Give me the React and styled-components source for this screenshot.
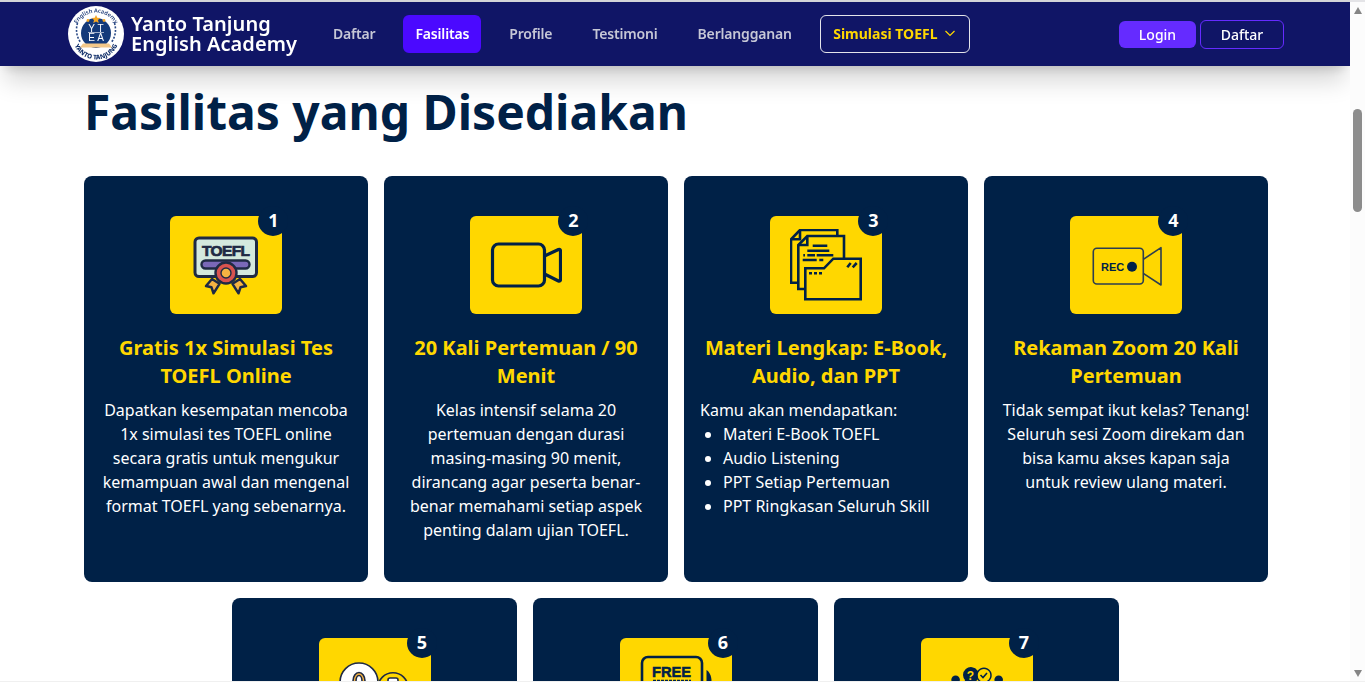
import React from "react";
import styled, { createGlobalStyle } from "styled-components";

const NAVY = "#002147";
const GOLD = "#ffd700";
const PURPLE = "#652bff";

const GlobalStyle = createGlobalStyle`
  body {
    margin: 0;
    background: #fff;
    font-family: "Noto Sans", "Open Sans", sans-serif;
  }
  * {
    box-sizing: border-box;
  }
`;

const Header = styled.header`
  position: fixed;
  z-index: 10;
  top: 0;
  left: 0;
  right: 15px;
  height: 66px;
  display: flex;
  align-items: center;
  padding: 0 66px 0 68px;
  background: #101566;
  border-top: 2px solid #d4d4d8;
  box-shadow: 0 20px 25px -5px rgba(0, 0, 0, 0.16), 0 8px 10px -6px rgba(0, 0, 0, 0.16);
`;

const Brand = styled.a`
  display: flex;
  align-items: center;
  gap: 7px;
  margin-right: 24px;
  color: #fff;
`;

const BrandName = styled.span`
  font-size: 20px;
  font-weight: 600;
  line-height: 20px;
  letter-spacing: 0.05px;
`;

const Nav = styled.nav`
  display: flex;
  align-items: center;
  gap: 16px;
`;

const NavLink = styled.a`
  height: 38px;
  display: flex;
  align-items: center;
  padding: 0 12px 2px;
  border-radius: 6px;
  font-size: 14px;
  font-weight: 600;
  letter-spacing: -0.17px;
  color: ${p => (p.$active ? "#fff" : "#c6c7d6")};
  background: ${p => (p.$active ? "#4b09ff" : "transparent")};
`;

const Dropdown = styled.button`
  width: 150px;
  height: 38px;
  display: flex;
  align-items: center;
  justify-content: center;
  gap: 5px;
  padding: 0 0 2px;
  background: none;
  border: 1px solid #e4e4ea;
  border-radius: 6px;
  font: 700 14px "Noto Sans", sans-serif;
  color: ${GOLD};
`;

const Auth = styled.div`
  margin-left: auto;
  display: flex;
  align-items: center;
  gap: 4px;
`;

const AuthButton = styled.button`
  height: ${p => (p.$outline ? "29px" : "27px")};
  width: ${p => (p.$outline ? "84px" : "77px")};
  border-radius: 6px;
  border: ${p => (p.$outline ? `1px solid ${PURPLE}` : "none")};
  background: ${p => (p.$outline ? "transparent" : PURPLE)};
  color: #fff;
  font: 500 14px "Noto Sans", sans-serif;
`;

const ScrollRail = styled.div`
  position: fixed;
  z-index: 20;
  top: 0;
  right: 0;
  bottom: 0;
  width: 15px;
  display: flex;
  flex-direction: column;
  align-items: center;
  padding: 7px 0 5px;
  background: #fcfcfc;
  box-shadow: inset 0 2px 0 #e4e4e7;
`;

const ScrollArrow = styled.span`
  width: 0;
  height: 0;
  margin-top: ${p => (p.$down ? "auto" : "0")};
  border-left: 4.5px solid transparent;
  border-right: 4.5px solid transparent;
  border-bottom: ${p => (p.$down ? "0" : "7px solid #858585")};
  border-top: ${p => (p.$down ? "7px solid #858585" : "0")};
`;

const ScrollThumb = styled.span`
  width: 9px;
  height: 103px;
  margin-top: 95px;
  border-radius: 5px;
  background: #8c8c8c;
`;

const BottomEdge = styled.div`
  position: fixed;
  z-index: 30;
  left: 0;
  right: 0;
  bottom: 0;
  height: 1px;
  background: #f0f0f0;
`;

const Page = styled.main`
  width: 1184px;
  margin: 0 0 0 84px;
  padding-top: 76px;
`;

const Heading = styled.h1`
  margin: 0 0 28px;
  font-size: 48px;
  font-weight: 700;
  line-height: 72px;
  color: ${NAVY};
`;

const Cards = styled.div`
  display: flex;
  flex-wrap: wrap;
  justify-content: center;
  gap: 16px;
`;

const Card = styled.article`
  width: ${p => (p.$wide ? "285px" : "284px")};
  min-height: 406px;
  padding: 40px 16px;
  border-radius: 8px;
  background: ${NAVY};
  color: #fff;

  &:last-child {
    margin-right: 1px;
  }
`;

const IconBox = styled.div`
  position: relative;
  width: 112px;
  height: 98px;
  margin: 0 auto 20px;
  display: flex;
  align-items: center;
  justify-content: center;
  border-radius: 6px;
  background: ${GOLD};
`;

const Badge = styled.span`
  position: absolute;
  top: -10px;
  right: -6px;
  width: 30px;
  height: 30px;
  display: flex;
  align-items: center;
  justify-content: center;
  padding: 0 0 2px 1px;
  border-radius: 50%;
  background: ${NAVY};
  color: #fff;
  font-size: 18px;
  font-weight: 700;
`;

const CardTitle = styled.h3`
  margin: 0 0 8px;
  font-size: 20px;
  font-weight: 700;
  line-height: 28px;
  text-align: center;
  color: ${GOLD};
`;

const CardText = styled.p`
  margin: 0;
  font-size: 16px;
  line-height: 24px;
  text-align: ${p => (p.$left ? "left" : "center")};
`;

const CardList = styled.ul`
  margin: 0;
  padding-left: 23px;
  font-size: 16px;
  line-height: 24px;
`;

const Logo = () => (
  <svg width="56" height="56" viewBox="0 0 56 56">
    <defs>
      <path id="logoTop" d="M6.5 28a21.5 21.5 0 0 1 43 0" />
      <path id="logoBottom" d="M4.5 30a23.5 23.5 0 0 0 47 0" />
    </defs>
    <circle cx="28" cy="28" r="28" fill="#fff" />
    <text fontSize="5.6" fill="#1c3a78" fontFamily="Noto Sans" fontWeight="600">
      <textPath href="#logoTop" startOffset="50%" textAnchor="middle">English Academy</textPath>
    </text>
    <text fontSize="6.4" fill="#12306a" fontFamily="Noto Sans" fontWeight="800">
      <textPath href="#logoBottom" startOffset="50%" textAnchor="middle">YANTO TANJUNG</textPath>
    </text>
    <circle cx="28" cy="27" r="15" fill="#143a7a" />
    <path d="M28 9l1.300 2.800 3 .3-2.300 2 .7 3-2.700-1.600-2.700 1.600.7-3-2.300-2 3-.3z" fill="#f5a623" />
    <circle cx="20" cy="14.500" r="1.400" fill="#f5a623" />
    <circle cx="36" cy="14.500" r="1.400" fill="#f5a623" />
    <g fill="none" stroke="#2a4a86" strokeWidth="1.600" strokeDasharray="2 1.500">
      <path d="M9.500 17c-2 7-1 14 3.500 20" />
      <path d="M46.500 17c2 7 1 14-3.500 20" />
    </g>
    <text x="23.500" y="25.500" fontSize="10" fill="#fff" textAnchor="middle" fontFamily="Liberation Sans">Y</text>
    <text x="32.500" y="25.500" fontSize="10" fill="#fff" textAnchor="middle" fontFamily="Liberation Sans">T</text>
    <path d="M20 26.500H36" stroke="#fff" strokeWidth="0.600" />
    <text x="23.500" y="35" fontSize="10" fill="#fff" textAnchor="middle" fontFamily="Liberation Sans">E</text>
    <text x="32.500" y="35" fontSize="10" fill="#fff" textAnchor="middle" fontFamily="Liberation Sans">A</text>
    <path d="M15 37.500h26l3 4H12z" fill="#f3c889" />
  </svg>
);

const Chevron = () => (
  <svg width="14" height="14" viewBox="0 0 14 14" fill="none" stroke={GOLD} strokeWidth="1.200">
    <path d="M2.500 5l4.500 4.500L11.500 5" />
  </svg>
);

const ToeflIcon = () => (
  <svg width="72" height="72" viewBox="0 0 72 72">
    <rect x="5" y="9" width="61.500" height="38.500" rx="4" fill="#d4e9de" stroke="#1f2a44" strokeWidth="3" />
    <text x="12" y="26.500" fontSize="15.500" fontWeight="700" fill="#1f2a44" stroke="#1f2a44" strokeWidth="0.700" fontFamily="Liberation Sans" textLength="48">TOEFL</text>
    <rect x="11.500" y="31.500" width="48" height="8" rx="4" fill="#7a68b8" stroke="#1f2a44" strokeWidth="2.400" />
    <path d="M22 50l-6 7 5.500 1.300 2 6 6-9.500zM50 50l6 7-5.500 1.300-2 6-6-9.500z" fill="#f5b342" stroke="#1f2a44" strokeWidth="2.500" strokeLinejoin="round" />
    <circle cx="36" cy="44" r="10.500" fill="#d9534f" stroke="#1f2a44" strokeWidth="2.400" />
    <circle cx="36" cy="44" r="5" fill="#f5b342" stroke="#1f2a44" strokeWidth="1.400" />
  </svg>
);

const VideoIcon = () => (
  <svg width="72" height="72" viewBox="0 0 72 72" fill="none" stroke={NAVY} strokeWidth="3.200" strokeLinejoin="round">
    <rect x="2.500" y="15" width="52" height="42" rx="6" />
    <path d="M54.500 27L68.500 20.500C70 20 70.500 21 70.500 22V50.500C70.500 52 69.500 52.500 68.500 52L54.500 45" />
  </svg>
);

const FolderIcon = () => (
  <svg width="72" height="72" viewBox="0 0 72 72" fill="none" stroke={NAVY} strokeWidth="2.600">
    <path d="M8.300 53.700H1V10.300L10 1H47.300V7" />
    <path d="M1 10.300H10V1" />
    <path d="M15 60H8.300V16L17.300 7H54V29" />
    <path d="M8.300 16H17.300V7" />
    <path d="M15.300 70.300V39.300H34L43.300 29.700H70.700V70.300Z" />
    <path d="M22.700 16.700H37.300M17.300 21.700H39.300M13.300 26.300H15M17.300 26.300H25M26.700 26.300H43.300M12.700 31H26.700M29.300 31H33.300" />
    <path d="M19 44.300H22M24 44.300H27M29 44.300H32" />
    <path d="M57.300 38.300L60.700 34M62.700 38.300L66.700 34" />
  </svg>
);

const RecIcon = () => (
  <svg width="72" height="72" viewBox="0 0 72 72">
    <g fill="none" stroke="#2c3e50" strokeWidth="1.600" strokeLinejoin="round">
      <rect x="3.300" y="19.300" width="50" height="35.700" rx="3.500" />
      <path d="M53.300 30.300L71 18.700V56L53.300 44.300" />
    </g>
    <text x="11" y="41.800" fontSize="11" fontWeight="700" fill={NAVY} fontFamily="Liberation Sans">REC</text>
    <circle cx="42" cy="37.700" r="5" fill={NAVY} />
  </svg>
);

const CoinsIcon = () => (
  <svg width="72" height="72" viewBox="0 0 72 72" stroke="#1f2a44" strokeWidth="1.600">
    <circle cx="20" cy="31" r="19" fill="#fff" />
    <ellipse cx="20" cy="30" rx="6" ry="8.500" fill="#f5b342" />
    <ellipse cx="20" cy="30" rx="3" ry="5.500" fill="#fff" />
    <circle cx="54" cy="36.700" r="15" fill={GOLD} />
    <rect x="49" y="27" width="10" height="6" rx="2" fill="#fff" />
  </svg>
);

const FreeIcon = () => (
  <svg width="72" height="72" viewBox="0 0 72 72">
    <rect x="2" y="6" width="60" height="60" rx="6" fill="none" stroke={NAVY} strokeWidth="2.600" />
    <text x="12" y="25.700" fontSize="15" fontWeight="700" fill={NAVY} stroke={NAVY} strokeWidth="0.500" fontFamily="Liberation Sans" textLength="39" lengthAdjust="spacingAndGlyphs">FREE</text>
    <path d="M13 29.500H51" stroke={NAVY} strokeWidth="1.500" strokeDasharray="3 1" />
    <path d="M66.500 19c3 2 5 6 5 11v10h-5z" fill={NAVY} />
  </svg>
);

const ChatIcon = () => (
  <svg width="72" height="72" viewBox="0 0 72 72">
    <circle cx="14.600" cy="28.700" r="4.300" fill={NAVY} />
    <circle cx="57.700" cy="28.700" r="4.300" fill={NAVY} />
    <path d="M22 24a8 8 0 1 1 5 7.500l-4 1.500 1-4a8 8 0 0 1-2-5z" fill={NAVY} />
    <text x="29.500" y="28.500" fontSize="12" fontWeight="700" textAnchor="middle" fill={GOLD} fontFamily="Liberation Sans">?</text>
    <path d="M36 24a7 7 0 1 1 11 6l2 3-5-1.500a7 7 0 0 1-8-7.500z" fill={GOLD} stroke={NAVY} strokeWidth="1.500" />
    <path d="M39.500 24l2.500 2.500 4-4.500" fill="none" stroke={NAVY} strokeWidth="1.600" />
  </svg>
);

const facilities = [
  {
    icon: <ToeflIcon />,
    title: "Gratis 1x Simulasi Tes TOEFL Online",
    text: "Dapatkan kesempatan mencoba 1x simulasi tes TOEFL online secara gratis untuk mengukur kemampuan awal dan mengenal format TOEFL yang sebenarnya."
  },
  {
    icon: <VideoIcon />,
    title: "20 Kali Pertemuan / 90 Menit",
    text: "Kelas intensif selama 20 pertemuan dengan durasi masing-masing 90 menit, dirancang agar peserta benar-benar memahami setiap aspek penting dalam ujian TOEFL."
  },
  {
    icon: <FolderIcon />,
    title: "Materi Lengkap: E-Book, Audio, dan PPT",
    intro: "Kamu akan mendapatkan:",
    items: ["Materi E-Book TOEFL", "Audio Listening", "PPT Setiap Pertemuan", "PPT Ringkasan Seluruh Skill"]
  },
  {
    icon: <RecIcon />,
    title: "Rekaman Zoom 20 Kali Pertemuan",
    text: "Tidak sempat ikut kelas? Tenang! Seluruh sesi Zoom direkam dan bisa kamu akses kapan saja untuk review ulang materi."
  },
  { icon: <CoinsIcon />, wide: true },
  { icon: <FreeIcon />, wide: true },
  { icon: <ChatIcon />, wide: true }
];

const links = ["Daftar", "Fasilitas", "Profile", "Testimoni", "Berlangganan"];

export default function App() {
  return (
    <>
      <GlobalStyle />
      <Header>
        <Brand>
          <Logo />
          <BrandName>
            Yanto Tanjung
            <br />
            English Academy
          </BrandName>
        </Brand>
        <Nav>
          {links.map(link => (
            <NavLink key={link} $active={link === "Fasilitas"}>
              {link}
            </NavLink>
          ))}
          <Dropdown>
            Simulasi TOEFL <Chevron />
          </Dropdown>
        </Nav>
        <Auth>
          <AuthButton>Login</AuthButton>
          <AuthButton $outline>Daftar</AuthButton>
        </Auth>
      </Header>
      <Page>
        <Heading>Fasilitas yang Disediakan</Heading>
        <Cards>
          {facilities.map((item, i) => (
            <Card key={i} $wide={item.wide}>
              <IconBox>
                {item.icon}
                <Badge>{i + 1}</Badge>
              </IconBox>
              {item.title && <CardTitle>{item.title}</CardTitle>}
              {item.text && <CardText>{item.text}</CardText>}
              {item.intro && <CardText $left>{item.intro}</CardText>}
              {item.items && (
                <CardList>
                  {item.items.map(entry => (
                    <li key={entry}>{entry}</li>
                  ))}
                </CardList>
              )}
            </Card>
          ))}
        </Cards>
      </Page>
      <ScrollRail>
        <ScrollArrow />
        <ScrollThumb />
        <ScrollArrow $down />
      </ScrollRail>
      <BottomEdge />
    </>
  );
}
